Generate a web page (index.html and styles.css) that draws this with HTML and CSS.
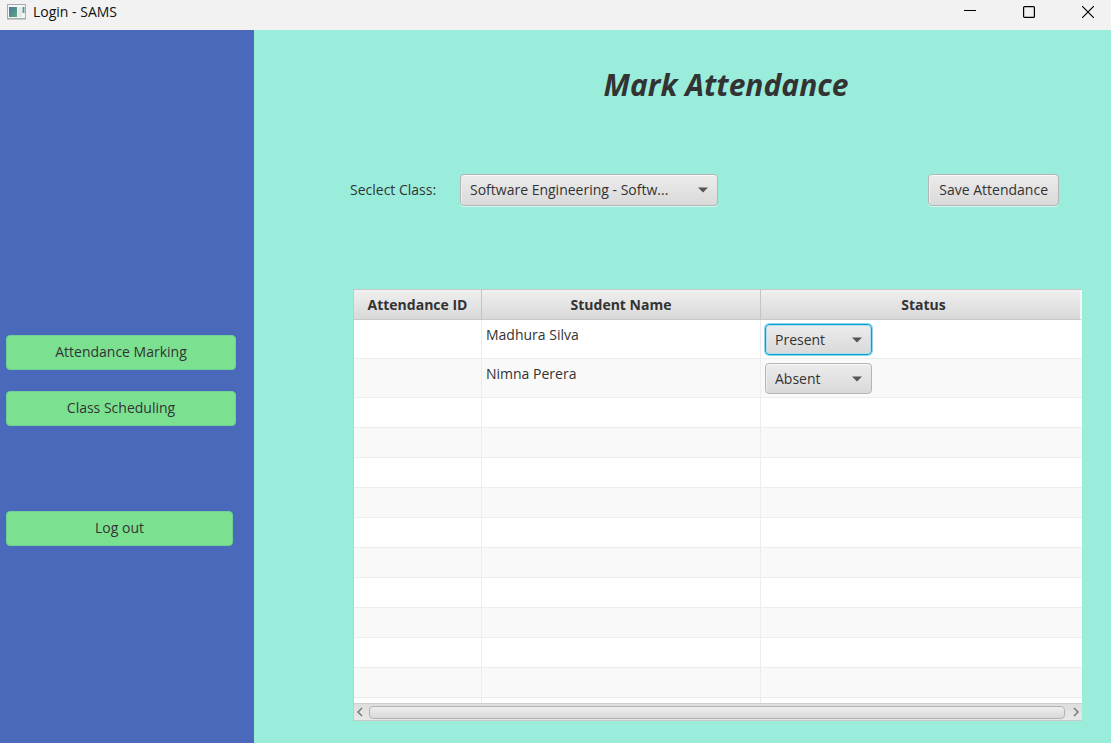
FILE: index.html
```html
<!DOCTYPE html>
<html lang="en">
<head>
<meta charset="utf-8">
<meta name="viewport" content="width=device-width, initial-scale=1">
<title>Login - SAMS</title>
<link rel="stylesheet" href="styles.css">
</head>
<body class="window">
<header class="titlebar">
  <svg class="app-icon" width="20" height="16" viewBox="0 0 20 16" aria-hidden="true">
    <defs><linearGradient id="pane" x1="0" y1="0" x2="1" y2="1"><stop offset="0" stop-color="#4b78a5"/><stop offset="1" stop-color="#58a878"/></linearGradient></defs>
    <rect x="0.5" y="0.5" width="18" height="14" fill="#f4f6f7" stroke="#a5abb2"/>
    <path d="M0 15.5h19" stroke="#c9cccf"/>
    <rect x="2" y="3" width="8" height="10" fill="url(#pane)"/>
    <rect x="11" y="3" width="4" height="10" fill="#e6eaec"/>
    <path d="M16.5 3v6" stroke="#5b9a93" stroke-width="2"/>
  </svg>
  <span class="window-title">Login - SAMS</span>
  <div class="window-controls">
    <button class="window-button" type="button" aria-label="Minimize"><svg width="12" height="12" viewBox="0 0 12 12"><path d="M0 4.5h12" stroke="#000"/></svg></button>
    <button class="window-button" type="button" aria-label="Maximize"><svg width="12" height="12" viewBox="0 0 12 12"><rect x="0.6" y="0.6" width="10.8" height="10.8" rx="1" fill="none" stroke="#000" stroke-width="1.2"/></svg></button>
    <button class="window-button" type="button" aria-label="Close"><svg width="12" height="12" viewBox="0 0 12 12"><path d="M0 0l12 12M12 0L0 12" stroke="#000" stroke-width="1.2"/></svg></button>
  </div>
</header>
<div class="layout">
  <nav class="sidebar">
    <button class="nav-button" type="button">Attendance Marking</button>
    <button class="nav-button" type="button">Class Scheduling</button>
    <button class="nav-button nav-logout" type="button">Log out</button>
  </nav>
  <main class="content">
    <h1 class="heading">Mark Attendance</h1>
    <div class="toolbar">
      <label class="field-label" for="class-select">Seclect Class:</label>
      <div class="combo combo-class">
        <select class="control" id="class-select"><option>Software Engineering - Softw...</option></select>
        <svg class="combo-arrow" width="10" height="6" viewBox="0 0 10 6" aria-hidden="true"><path d="M0 0.5h10L5 5.5z"/></svg>
      </div>
      <button class="control save" type="button">Save Attendance</button>
    </div>
    <section class="table-view">
      <div class="table-clip">
        <table class="grid">
          <colgroup><col class="col-id"><col class="col-name"><col></colgroup>
          <thead><tr><th>Attendance ID</th><th>Student Name</th><th>Status</th></tr></thead>
          <tbody>
            <tr class="record"><td></td><td>Madhura Silva</td><td>
              <div class="combo combo-status"><select class="control focused" aria-label="Status of Madhura Silva"><option selected>Present</option><option>Absent</option></select><svg class="combo-arrow" width="10" height="6" viewBox="0 0 10 6" aria-hidden="true"><path d="M0 0.5h10L5 5.5z"/></svg></div></td></tr>
            <tr class="record"><td></td><td>Nimna Perera</td><td>
              <div class="combo combo-status"><select class="control" aria-label="Status of Nimna Perera"><option>Present</option><option selected>Absent</option></select><svg class="combo-arrow" width="10" height="6" viewBox="0 0 10 6" aria-hidden="true"><path d="M0 0.5h10L5 5.5z"/></svg></div></td></tr>
            <tr><td></td><td></td><td></td></tr>
            <tr><td></td><td></td><td></td></tr>
            <tr><td></td><td></td><td></td></tr>
            <tr><td></td><td></td><td></td></tr>
            <tr><td></td><td></td><td></td></tr>
            <tr><td></td><td></td><td></td></tr>
            <tr><td></td><td></td><td></td></tr>
            <tr><td></td><td></td><td></td></tr>
            <tr><td></td><td></td><td></td></tr>
            <tr><td></td><td></td><td></td></tr>
            <tr><td></td><td></td><td></td></tr>
          </tbody>
        </table>
      </div>
      <div class="scrollbar">
        <button class="scroll-button" type="button" aria-label="Scroll left"><svg width="6" height="10" viewBox="0 0 6 10"><path d="M5 1L1 5l4 4"/></svg></button>
        <div class="thumb"></div>
        <button class="scroll-button" type="button" aria-label="Scroll right"><svg width="6" height="10" viewBox="0 0 6 10"><path d="M1 1l4 4-4 4"/></svg></button>
      </div>
    </section>
  </main>
</div>
</body>
</html>
```
FILE: styles.css
```css
* { box-sizing: border-box; }

.window {
  margin: 0;
  height: 100vh;
  display: flex;
  flex-direction: column;
  overflow: hidden;
  font: 14px/20px "Open Sans", "Noto Sans", sans-serif;
  color: #333;
}

button, select { font: inherit; color: inherit; }

.titlebar {
  display: flex;
  align-items: center;
  flex: none;
  height: 30px;
  padding: 0 11px 7px 7px;
  background: #f2f2f2;
  color: #111;
}
.window-title { margin-left: 6px; }
.window-controls { display: flex; gap: 35px; margin-left: auto; }
.window-button {
  display: flex;
  align-items: center;
  justify-content: center;
  width: 24px;
  height: 24px;
  padding: 0;
  border: 0;
  background: none;
}

.layout { display: flex; flex: 1; min-height: 0; }

.sidebar {
  display: flex;
  flex-direction: column;
  gap: 21px;
  flex: none;
  width: 254px;
  padding: 305px 18px 0 6px;
  background: #4a69bb;
}
.nav-button {
  height: 35px;
  padding: 0 0 2px;
  border: 1px solid #70cf93;
  border-radius: 4px;
  background: #7be191;
}
.nav-logout { margin: 64px 3px 0 0; }

.content {
  display: flex;
  flex-direction: column;
  flex: 1;
  min-width: 0;
  padding: 35px 29px 22px 96px;
  background: #9aeddb;
}
.heading {
  margin: 0 0 69px 20px;
  font-size: 30px;
  line-height: 40px;
  font-style: italic;
  font-weight: 700;
  text-align: center;
}
.toolbar {
  display: flex;
  align-items: center;
  margin: 0 23px 83px 0;
}
.field-label { width: 110px; }

.control {
  height: 32px;
  border: 1px solid #b5b5b5;
  border-radius: 4px;
  background: linear-gradient(#ececec, #d9d9d9);
  box-shadow: inset 0 1px #f8f8f8, inset 1px 0 #efefef, 0 1px rgba(255, 255, 255, 0.6);
}
.focused {
  border-color: #039ed3;
  outline: 1px solid #8fd6ee;
  outline-offset: 0;
  box-shadow: inset 0 0 0 1px #b4dfee;
}
.save { margin-left: auto; padding: 0 10px; }

.combo { position: relative; }
.combo .control {
  width: 100%;
  padding: 0 28px 1px 9px;
  appearance: none;
}
.combo-class { width: 258px; }
.combo-status { width: 107px; }
.combo-arrow {
  position: absolute;
  right: 10px;
  top: 13px;
  fill: #555;
  pointer-events: none;
}

.table-view {
  display: flex;
  flex-direction: column;
  flex: 1;
  min-height: 0;
  margin-left: 3px;
  border: 1px solid #c8c8c8;
  border-right: 0;
  background: #fff;
}
.table-clip { flex: 1; min-height: 0; overflow: hidden; }
.grid {
  width: 100%;
  table-layout: fixed;
  border-collapse: separate;
  border-spacing: 0;
}
.col-id { width: 128px; }
.col-name { width: 279px; }
.grid th {
  height: 30px;
  padding: 0;
  border-right: 1px solid #c4c4c4;
  border-bottom: 1px solid #c8c8c8;
  background: linear-gradient(#efefef, #d9d9d9);
  font-weight: 700;
}
.grid th:last-child { padding-left: 6px; border-right: 2px solid #f5f5f5; }
.grid td {
  height: 30px;
  padding: 0 4px;
  border-right: 1px solid #ededed;
  border-bottom: 1px solid #ededed;
  vertical-align: top;
}
.grid td:last-child { border-right: 0; }
.grid tbody tr:nth-child(even) { background: #f9f9f9; }
.grid .record td { height: 39px; padding-top: 5px; }
.grid .record td:last-child { padding-top: 4px; }
.combo-status .control { display: block; height: 31px; padding-bottom: 0; }

.scrollbar {
  display: flex;
  align-items: center;
  flex: none;
  height: 17px;
  border-top: 1px solid #cfcfcf;
  background: linear-gradient(#dedede, #e8e8e8);
}
.scroll-button {
  display: flex;
  align-items: center;
  justify-content: center;
  width: 12px;
  height: 14px;
  padding: 0;
  border: 0;
  background: none;
}
.scroll-button svg { fill: none; stroke: #737373; stroke-width: 1.4; }
.thumb {
  flex: 1;
  height: 13px;
  margin: 0 5px 0 3px;
  border: 1px solid #b3b3b3;
  border-radius: 4px;
  background: linear-gradient(#eee, #d9d9d9);
}
```
